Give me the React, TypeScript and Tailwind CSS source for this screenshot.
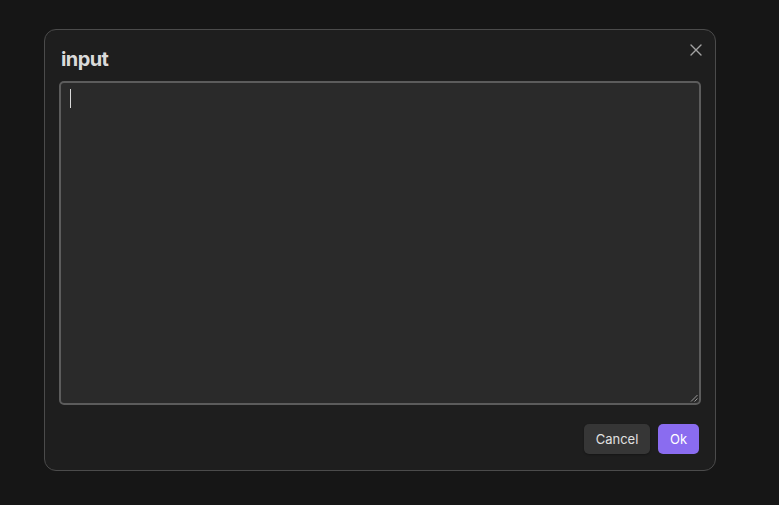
export default function App() {
  return (
    <div
      className="w-[779px] h-[505px] bg-[#161616] pt-[29px] pl-[44px]"
      style={{ fontFamily: 'Inter, "Noto Sans", sans-serif' }}
    >
      <div className="relative w-[672px] h-[442px] rounded-[12px] border border-[#4b4b4b] bg-[#1e1e1e] px-[14px] pt-[17px] flex flex-col">
        <button className="absolute right-[13px] top-[14px] w-[12px] h-[12px] flex items-center justify-center text-[#a3a3a3]">
          <svg width="12" height="12" viewBox="0 0 12 12" fill="none" stroke="currentColor" strokeWidth="1.4" strokeLinecap="round">
            <path d="M1 1 L11 11 M11 1 L1 11" />
          </svg>
        </button>
        <div className="h-[25px] leading-[25px] pl-[2px] text-[20px] font-bold text-[#dadada] tracking-[-0.6px]">
          input
        </div>
        <div className="mt-[9px] relative w-[642px] h-[324px] rounded-[5px] border-2 border-[#5c5c5c] bg-[#2a2a2a]">
          <div className="absolute left-[9px] top-[6px] w-[1px] h-[19px] bg-[#dadada]" />
          <svg className="absolute right-[1px] bottom-[1px]" width="8" height="8" viewBox="0 0 8 8" stroke="#9a9a9a" strokeWidth="1">
            <path d="M7.5 1 L1 7.5 M7.5 4.5 L4.5 7.5" />
          </svg>
        </div>
        <div className="mt-[19px] flex justify-end gap-[8px] pr-[2px]">
          <button className="h-[30px] w-[66px] pt-[2px] rounded-[5px] bg-[#363636] text-[13px] text-[#e0e0e0] shadow-[0_1px_2px_rgba(0,0,0,0.3)]">
            Cancel
          </button>
          <button className="h-[30px] w-[41px] pt-[2px] rounded-[5px] bg-[#8a6cf0] text-[13px] text-white">
            Ok
          </button>
        </div>
      </div>
    </div>
  );
}
